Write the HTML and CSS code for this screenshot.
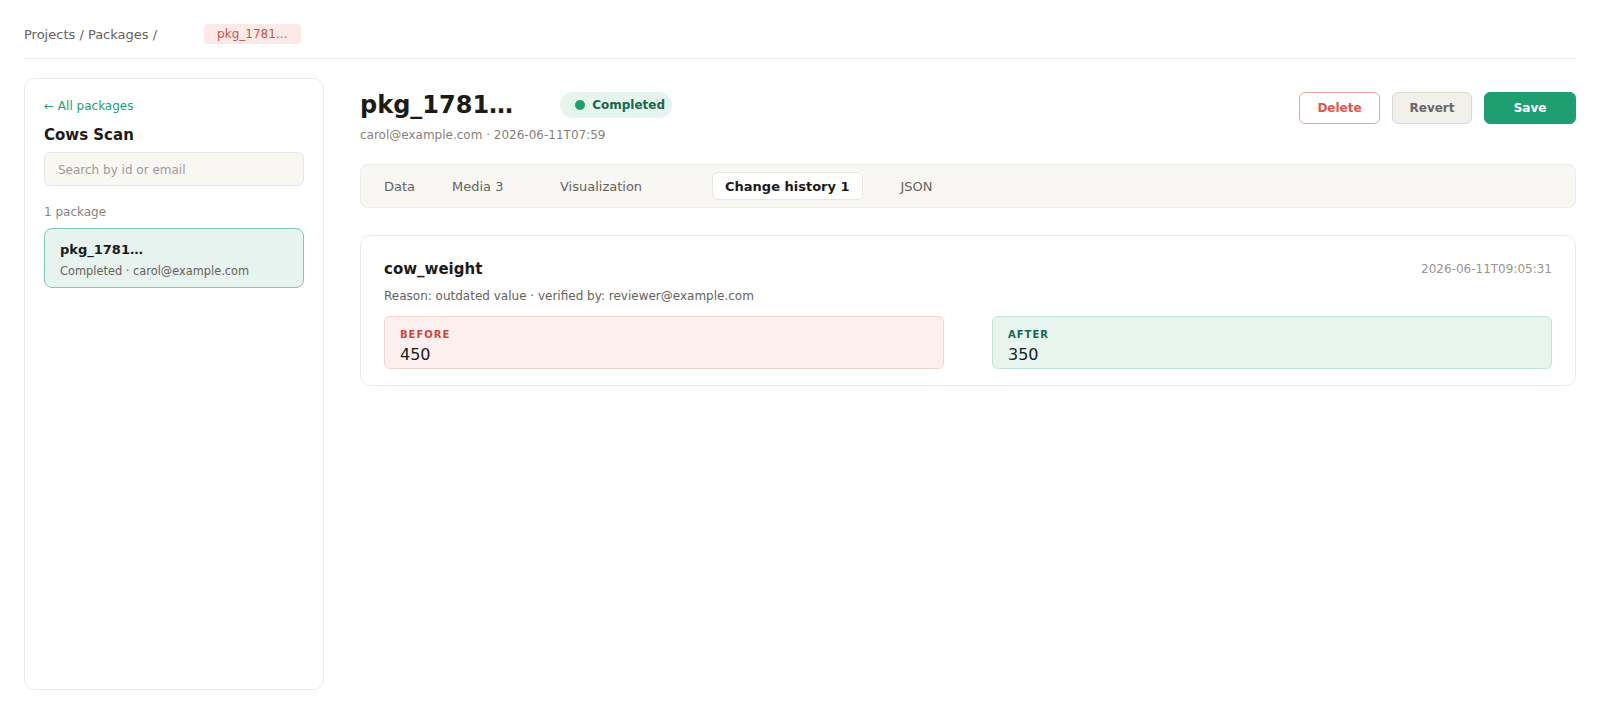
FILE: index.html
```html
<!DOCTYPE html>
<html>

<head>
    <meta charset="utf-8">
    <title>pkg_1781… - Change history</title>
    <link rel="stylesheet" href="styles.css">
</head>

<body>
    <div class="page">
        <!-- 상단 경로 -->
        <header class="crumbs">
            <span class="crumbs-path">Projects / Packages /</span>
            <span class="crumbs-chip">pkg_1781…</span>
        </header>

        <div class="layout">
            <!-- 좌측 목록 -->
            <aside class="side">
                <a class="side-back" href="#">← All packages</a>
                <h2 class="side-title">Cows Scan</h2>
                <input class="side-search" type="text" placeholder="Search by id or email">
                <p class="side-count">1 package</p>
                <div class="pkg-item">
                    <div class="pkg-item-id">pkg_1781…</div>
                    <div class="pkg-item-meta">Completed · carol@example.com</div>
                </div>
            </aside>

            <!-- 본문 -->
            <main class="main">
                <div class="main-head">
                    <div>
                        <div class="title-row">
                            <h1 class="title">pkg_1781…</h1>
                            <span class="status"><i class="status-dot"></i>Completed</span>
                        </div>
                        <p class="sub">carol@example.com · 2026-06-11T07:59</p>
                    </div>
                    <div class="actions">
                        <button class="btn btn-delete">Delete</button>
                        <button class="btn btn-revert">Revert</button>
                        <button class="btn btn-save">Save</button>
                    </div>
                </div>

                <nav class="tabs">
                    <span class="tab tab-data">Data</span>
                    <span class="tab tab-media">Media 3</span>
                    <span class="tab tab-vis">Visualization</span>
                    <span class="tab tab-active">Change history 1</span>
                    <span class="tab tab-json">JSON</span>
                </nav>

                <section class="change">
                    <div class="change-head">
                        <h3 class="change-field">cow_weight</h3>
                        <span class="change-time">2026-06-11T09:05:31</span>
                    </div>
                    <p class="change-reason">Reason: outdated value · verified by: reviewer@example.com</p>
                    <div class="diff">
                        <div class="diff-box diff-before">
                            <div class="diff-label">BEFORE</div>
                            <div class="diff-value">450</div>
                        </div>
                        <div class="diff-box diff-after">
                            <div class="diff-label">AFTER</div>
                            <div class="diff-value">350</div>
                        </div>
                    </div>
                </section>
            </main>
        </div>
    </div>
</body>

</html>
```

FILE: styles.css
```css
/* 기본 */
body {
    margin: 0;
    font-family: "DejaVu Sans", "Noto Sans", sans-serif;
    color: #1c1b19;
    background: #fff;
}
h1, h2, h3, p {
    margin: 0;
}

.page {
    padding: 24px 24px 0;
}

/* 경로 */
.crumbs {
    display: flex;
    align-items: center;
    height: 20px;
    padding-bottom: 14px;
    border-bottom: 1px solid #ebe9e4;
}
.crumbs-path {
    font-size: 13px;
    color: #66625c;
}
.crumbs-chip {
    margin-left: 47px;
    padding: 0 13px;
    height: 20px;
    line-height: 20px;
    font-size: 12px;
    color: #c9524a;
    background: #fbeae8;
    border-radius: 4px;
}

.layout {
    display: flex;
    gap: 36px;
    margin-top: 19px;
}

/* 좌측 */
.side {
    box-sizing: border-box;
    width: 300px;
    height: 612px;
    flex: none;
    padding: 19px 19px;
    border: 1px solid #ecebe6;
    border-radius: 10px;
}
.side-back {
    display: block;
    font-size: 12px;
    line-height: 16px;
    color: #1f9e72;
    text-decoration: none;
}
.side-title {
    margin-top: 11px;
    font-size: 15px;
    line-height: 20px;
    font-weight: bold;
}
.side-search {
    box-sizing: border-box;
    display: block;
    width: 100%;
    height: 34px;
    margin-top: 7px;
    padding: 1px 13px 0;
    font-family: inherit;
    font-size: 12px;
    background: #f8f7f3;
    border: 1px solid #e8e6df;
    border-radius: 6px;
    outline: none;
}
.side-search::placeholder {
    color: #a19b93;
}
.side-count {
    margin-top: 18px;
    font-size: 12px;
    line-height: 16px;
    color: #8a847d;
}
.pkg-item {
    box-sizing: border-box;
    height: 60px;
    margin-top: 8px;
    padding: 12px 15px;
    background: #e7f3ee;
    border: 1px solid #7dc9ab;
    border-radius: 8px;
}
.pkg-item-id {
    font-size: 13px;
    line-height: 18px;
    font-weight: bold;
}
.pkg-item-meta {
    margin-top: 4px;
    font-size: 11.4px;
    line-height: 16px;
    color: #66625c;
}

/* 본문 */
.main {
    flex: 1;
    min-width: 0;
}
.main-head {
    display: flex;
    justify-content: space-between;
    align-items: flex-start;
}
.title-row {
    display: flex;
    align-items: center;
    margin-top: 11px;
}
.title {
    font-size: 24px;
    line-height: 32px;
    font-weight: bold;
}
.status {
    display: flex;
    align-items: center;
    gap: 7px;
    margin-left: 47px;
    height: 26px;
    padding: 0 7px 0 15px;
    font-size: 12px;
    font-weight: bold;
    color: #17684c;
    background: #e6f4ee;
    border-radius: 13px;
}
.status-dot {
    width: 10px;
    height: 10px;
    border-radius: 50%;
    background: #1f9e72;
}
.sub {
    margin-top: 6px;
    font-size: 12px;
    line-height: 16px;
    color: #8a8078;
}

.actions {
    display: flex;
    gap: 12px;
    margin-top: 14px;
}
.btn {
    height: 32px;
    font-family: inherit;
    font-size: 12px;
    font-weight: bold;
    border-radius: 6px;
    border: 1px solid transparent;
}
.btn-delete {
    width: 81px;
    color: #e0574d;
    background: #fff;
    border-color: #f0a19b;
}
.btn-revert {
    width: 80px;
    color: #6b6660;
    background: #f1f0eb;
    border-color: #dcd9d0;
}
.btn-save {
    width: 92px;
    color: #fff;
    background: #1f9e72;
    border-color: #1f9e72;
}

/* 탭 */
.tabs {
    display: flex;
    align-items: center;
    margin-top: 21px;
    height: 44px;
    box-sizing: border-box;
    padding: 0 7px;
    background: #f8f7f4;
    border: 1px solid #efede8;
    border-radius: 8px;
}
.tab {
    box-sizing: border-box;
    height: 28px;
    line-height: 28px;
    padding: 0 15px;
    font-size: 13px;
    white-space: nowrap;
    color: #66625c;
    border: 1px solid transparent;
}
.tab-data {
    width: 68px;
}
.tab-media {
    width: 108px;
}
.tab-vis {
    width: 168px;
}
.tab-active {
    padding: 0 12px;
    font-weight: bold;
    color: #1c1b19;
    background: #fff;
    border-color: #e8e6df;
    border-radius: 6px;
}
.tab-json {
    margin-left: 22px;
}

/* 변경 이력 카드 */
.change {
    margin-top: 27px;
    padding: 23px 23px 16px;
    border: 1px solid #ecebe6;
    border-radius: 10px;
}
.change-head {
    display: flex;
    justify-content: space-between;
    align-items: center;
}
.change-field {
    font-size: 15px;
    line-height: 20px;
    font-weight: bold;
}
.change-time {
    font-size: 12px;
    color: #9a958e;
}
.change-reason {
    margin-top: 9px;
    font-size: 12px;
    line-height: 16px;
    color: #66625c;
}
.diff {
    display: grid;
    grid-template-columns: 1fr 1fr;
    gap: 48px;
    margin-top: 12px;
}
.diff-box {
    padding: 11px 15px 3px;
    border: 1px solid;
    border-radius: 6px;
}
.diff-before {
    background: #fcefed;
    border-color: #f5d2cd;
}
.diff-after {
    background: #e8f5ef;
    border-color: #c3e5d6;
}
.diff-label {
    font-size: 10px;
    line-height: 14px;
    font-weight: bold;
    letter-spacing: 1px;
}
.diff-before .diff-label {
    color: #c9483f;
}
.diff-after .diff-label {
    color: #17684c;
}
.diff-value {
    margin-top: 3px;
    font-size: 16px;
    line-height: 20px;
}
```
